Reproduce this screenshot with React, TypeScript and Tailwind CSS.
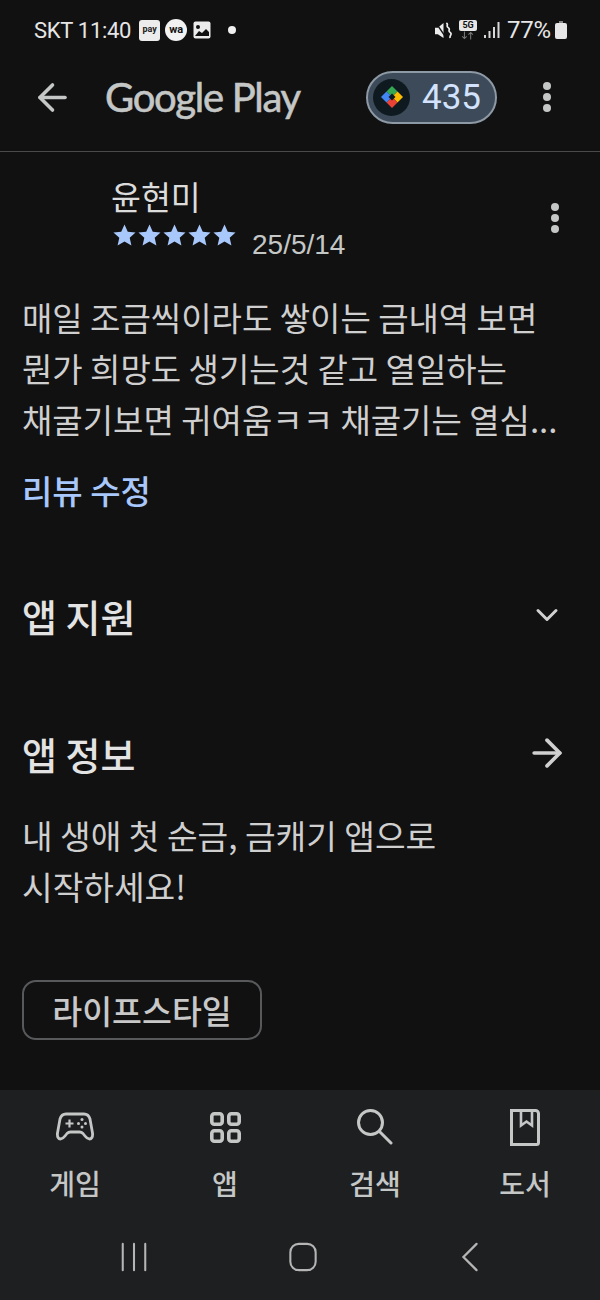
import { ChevronDown, ArrowRight, ArrowLeft } from 'lucide-react';

const KR = { fontFamily: '"Noto Sans CJK KR", "Liberation Sans", sans-serif' };

function Star() {
  return (
    <svg viewBox="-1 -1 26 26" className="w-[25px] h-[25px]" fill="#a8c7fa">
      <path d="M12 .5l3.400 7.500 8.100.9-6.100 5.400 1.800 8.100L12 18.300l-7.200 4.100 1.800-8.100L.5 8.900l8.100-.9z" />
    </svg>
  );
}

function Dots({ className }: { className: string }) {
  return (
    <div className={className}>
      <span className="w-[8px] h-[8px] rounded-full bg-[#c4c7c5]" />
      <span className="w-[8px] h-[8px] rounded-full bg-[#c4c7c5]" />
      <span className="w-[8px] h-[8px] rounded-full bg-[#c4c7c5]" />
    </div>
  );
}

function StatusBar() {
  return (
    <div className="h-[60px] flex items-center pl-[34px] pr-[33px] text-[#e6e6e6] text-[22px]" style={{ fontFamily: 'Roboto, sans-serif' }}>
      <span className="tracking-[-0.3px]">SKT 11:40</span>
      <span className="ml-[8px] w-[21px] h-[21px] rounded-[3px] bg-[#ececec] text-[#222] text-[9px] font-bold flex items-center justify-center">pay</span>
      <span className="ml-[5px] w-[22px] h-[22px] rounded-full bg-[#f2f2f2] text-[#111] text-[11px] font-bold flex items-center justify-center">wa</span>
      <svg viewBox="0 0 18 18" className="ml-[6px] w-[18px] h-[18px]">
        <rect width="17" height="17" x="0.5" y="0.5" rx="2" fill="#ececec" />
        <circle cx="5" cy="6" r="2" fill="#111" />
        <path d="M2 15l4-5 3 2 4-4 3 3v4z" fill="#111" />
      </svg>
      <span className="ml-[17px] w-[8px] h-[8px] rounded-full bg-[#f0f0f0]" />
      <div className="flex-1" />
      <svg viewBox="0 0 18 18" className="w-[17px] h-[17px]" fill="none">
        <path d="M0 6h3l6-5v16l-6-4H0z" fill="#ececec" />
        <path d="M1 1l11 16" stroke="#111" strokeWidth="1.500" />
        <path d="M12 1c3 2-1 3 2 5s-1 3 2 5-1 3 0 6" stroke="#ececec" strokeWidth="1.800" />
      </svg>
      <div className="ml-[7px] flex flex-col items-center w-[18px]">
        <span className="w-[18px] h-[11px] rounded-[2px] bg-[#e6e6e6] text-[#111] text-[9px] leading-[11px] font-bold text-center">5G</span>
        <svg viewBox="0 0 18 9" className="w-[16px] h-[9px]" fill="none" stroke="#777" strokeWidth="1.200">
          <path d="M5 0v8M2.500 5.500L5 8l2.500-2.500M12 9V1M9.500 3.500L12 1l2.500 2.500" />
        </svg>
      </div>
      <svg viewBox="0 0 16 16" className="ml-[7px] w-[16px] h-[16px]" fill="#d8d8d8">
        <rect x="0" y="13" width="2" height="3" />
        <rect x="4.500" y="9" width="2" height="7" />
        <rect x="9" y="5" width="2" height="11" />
        <rect x="13.500" y="0" width="2" height="16" />
      </svg>
      <span className="ml-[7px] text-[24px] tracking-[-0.2px]">77%</span>
      <svg viewBox="0 0 12 18" className="ml-[4px] w-[12px] h-[18px]" fill="#e6e6e6">
        <path d="M4 0h4v2H4z" fill="#888" />
        <rect x="0" y="2" width="12" height="16" rx="2" />
      </svg>
    </div>
  );
}

function AppBar() {
  return (
    <div className="h-[92px] flex items-center border-b border-[#4a4a4a] pb-[17px] pl-[31px] pr-[49px]">
      <ArrowLeft className="w-[43px] h-[43px] text-[#c4c7c5]" strokeWidth={2} />
      <span className="ml-[31px] text-[40px] tracking-[-1.300px] text-[#c4c7c5] [-webkit-text-stroke:0.6px_#c4c7c5]" style={{ fontFamily: 'Lato, sans-serif' }}>Google Play</span>
      <div className="ml-auto flex items-center w-[131px] h-[53px] rounded-full bg-[#3c4a59] border-[2px] border-[#8d99a5] pl-[5px]">
        <div className="w-[37px] h-[37px] rounded-full bg-[#0f1a20] flex items-center justify-center">
          <svg viewBox="0 0 24 24" className="w-[24px] h-[24px]">
            <path d="M12 1l5.500 5.500L12 12 6.500 6.500z" fill="#34a853" />
            <path d="M23 12l-5.500 5.500L12 12l5.500-5.500z" fill="#fbbc04" />
            <path d="M12 23l-5.500-5.500L12 12l5.500 5.500z" fill="#ea4335" />
            <path d="M1 12l5.500-5.500L12 12l-5.500 5.500z" fill="#4285f4" />
            <path d="M12 8.500l3.500 3.500-3.500 3.500L8.500 12z" fill="#0f1a20" />
          </svg>
        </div>
        <span className="ml-[12px] text-[35px] leading-none text-[#d3e3fd]" style={{ fontFamily: 'Roboto, sans-serif' }}>435</span>
      </div>
      <Dots className="ml-[46px] flex flex-col gap-[3px]" />
    </div>
  );
}

function Review() {
  return (
    <div className="px-[22px] pt-[22px]">
      <div className="flex pl-[90px] relative">
        <div>
          <p className="text-[32.5px] leading-[44px] text-[#dcdcdc] -ml-px" style={KR}>윤현미</p>
          <div className="flex items-start">
            <div className="flex mt-[5px]">
              <Star /><Star /><Star /><Star /><Star />
            </div>
            <span className="ml-[15px] mt-[10px] text-[28px] leading-[34px] text-[#c4c7c5]" style={{ fontFamily: '"Liberation Sans", sans-serif' }}>25/5/14</span>
          </div>
        </div>
        <Dots className="absolute right-[19px] top-[29px] flex flex-col gap-[3px]" />
      </div>
      <p className="mt-[30px] text-[33px] leading-[51px] text-[#cfcfcf] whitespace-nowrap" style={KR}>
        매일 조금씩이라도 쌓이는 금내역 보면<br />
        뭔가 희망도 생기는것 같고 열일하는<br />
        채굴기보면 귀여움ㅋㅋ 채굴기는 열심...
      </p>
      <p className="mt-[22px] text-[33px] leading-[46px] font-medium text-[#a8c7fa]" style={KR}>리뷰 수정</p>
    </div>
  );
}

function Sections() {
  return (
    <div className="px-[22px]">
      <div className="mt-[77px] h-[50px] flex items-center justify-between pr-[13px]">
        <h2 className="text-[38px] font-medium text-[#e3e3e3]" style={KR}>앱 지원</h2>
        <ChevronDown className="w-[36px] h-[36px] text-[#d0d0d0]" strokeWidth={2} />
      </div>
      <div className="mt-[88px] h-[50px] flex items-center justify-between pr-[9px]">
        <h2 className="text-[38px] font-medium text-[#e3e3e3]" style={KR}>앱 정보</h2>
        <ArrowRight className="w-[44px] h-[44px] text-[#d0d0d0]" strokeWidth={2} />
      </div>
      <p className="mt-[31px] text-[33.300px] leading-[51px] text-[#cfcfcf]" style={KR}>
        내 생애 첫 순금, 금캐기 앱으로<br />시작하세요!
      </p>
      <div className="mt-[69px] w-[240px] h-[60px] rounded-[14px] border-[2px] border-[#58595b] flex items-center justify-center">
        <span className="text-[32.500px] font-medium text-[#c8c8c8]" style={KR}>라이프스타일</span>
      </div>
    </div>
  );
}

function GameIcon() {
  return (
    <svg viewBox="0 0 38 30" className="w-[38px] h-[30px]" fill="none" stroke="#c4c7c5" strokeWidth="2.800" strokeLinejoin="round">
      <path d="M10 2h18c3 0 5 1.500 6 5l2.500 14c.5 4-1 6-3 6-2 0-3-1-4.500-3l-2-2.500c-1-1-2-1.500-3.500-1.500h-9c-1.500 0-2.500.5-3.500 1.500L9 24c-1.500 2-2.500 3-4.500 3-2 0-3.500-2-3-6L4 7c1-3.500 3-5 6-5z" />
      <path d="M9.500 11.500h8M13.500 7.500v8" strokeWidth="2.200" />
      <circle cx="26" cy="7.500" r="1.500" fill="#c4c7c5" stroke="none" />
      <circle cx="26" cy="15" r="1.500" fill="#c4c7c5" stroke="none" />
      <circle cx="22.500" cy="11.500" r="1.500" fill="#c4c7c5" stroke="none" />
      <circle cx="29.500" cy="11.500" r="1.500" fill="#c4c7c5" stroke="none" />
    </svg>
  );
}

function AppsIcon() {
  return (
    <svg viewBox="0 0 31 31" className="w-[31px] h-[31px]" fill="none" stroke="#c4c7c5" strokeWidth="3.600">
      <rect x="1.800" y="1.800" width="10.400" height="10.400" rx="2.500" />
      <rect x="18.800" y="1.800" width="10.400" height="10.400" rx="2.500" />
      <rect x="1.800" y="18.800" width="10.400" height="10.400" rx="2.500" />
      <rect x="18.800" y="18.800" width="10.400" height="10.400" rx="2.500" />
    </svg>
  );
}

function SearchIcon() {
  return (
    <svg viewBox="0 0 36 36" className="w-[36px] h-[36px]" fill="none" stroke="#c4c7c5" strokeWidth="3" strokeLinecap="round">
      <circle cx="13.500" cy="13.500" r="12" />
      <path d="M22.500 22.500L34 34" />
    </svg>
  );
}

function BookIcon() {
  return (
    <svg viewBox="0 0 30 37" className="w-[30px] h-[37px]" fill="none" stroke="#c4c7c5" strokeWidth="3">
      <path d="M1.500 1.500h24a3 3 0 0 1 3 3v29a2 2 0 0 1-2 2h-25z" />
      <path d="M11 2v14.500l5.500-4 5.500 4V2" strokeWidth="2.600" />
    </svg>
  );
}

function BottomNav() {
  const items = [
    { label: '게임', icon: <GameIcon /> },
    { label: '앱', icon: <AppsIcon /> },
    { label: '검색', icon: <SearchIcon /> },
    { label: '도서', icon: <BookIcon /> },
  ];
  return (
    <div className="bg-[#1e1f21] h-[210px] mt-[50px]">
      <div className="grid grid-cols-4 pt-[16px]">
        {items.map((item) => (
          <div key={item.label} className="flex flex-col items-center">
            <div className="h-[42px] flex items-center justify-center">{item.icon}</div>
            <span className="mt-[15px] text-[28px] leading-[40px] font-medium text-[#c4c7c5]" style={KR}>{item.label}</span>
          </div>
        ))}
      </div>
      <div className="mt-[39px] flex items-center pl-[120px]">
        <svg viewBox="0 0 28 32" className="w-[28px] h-[30px]" stroke="#b5b5b5" strokeWidth="2.200" strokeLinecap="round">
          <path d="M2 2v28M14 2v28M26 2v28" />
        </svg>
        <svg viewBox="0 0 30 32" className="ml-[140px] w-[30px] h-[30px]" fill="none" stroke="#b5b5b5" strokeWidth="2.200">
          <rect x="1.500" y="2" width="27" height="28" rx="9" />
        </svg>
        <svg viewBox="0 0 18 32" className="ml-[143px] w-[18px] h-[30px]" fill="none" stroke="#b5b5b5" strokeWidth="2.400" strokeLinecap="round">
          <path d="M16 2L2 16l14 14" />
        </svg>
      </div>
    </div>
  );
}

export default function App() {
  return (
    <div className="w-[600px] h-[1300px] overflow-hidden bg-[#111112] flex flex-col">
      <StatusBar />
      <AppBar />
      <Review />
      <Sections />
      <BottomNav />
    </div>
  );
}
